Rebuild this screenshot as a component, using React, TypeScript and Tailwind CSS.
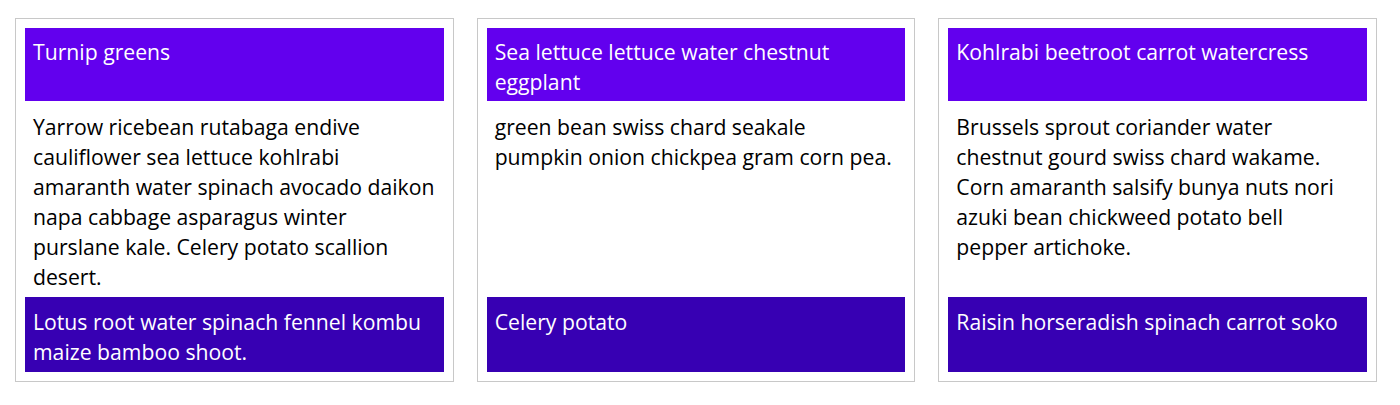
const cards = [
  {
    title: 'Turnip greens',
    body: 'Yarrow ricebean rutabaga endive cauliflower sea lettuce kohlrabi amaranth water spinach avocado daikon napa cabbage asparagus winter purslane kale. Celery potato scallion desert.',
    footer: 'Lotus root water spinach fennel kombu maize bamboo shoot.',
  },
  {
    title: 'Sea lettuce lettuce water chestnut eggplant',
    body: 'green bean swiss chard seakale pumpkin onion chickpea gram corn pea.',
    footer: 'Celery potato',
  },
  {
    title: 'Kohlrabi beetroot carrot watercress',
    body: 'Brussels sprout coriander water chestnut gourd swiss chard wakame. Corn amaranth salsify bunya nuts nori azuki bean chickweed potato bell pepper artichoke.',
    footer: 'Raisin horseradish spinach carrot soko',
  },
];

export default function App() {
  return (
    <div className="min-h-[405px] bg-white pl-[15px] pr-[23px] pt-[18px] font-['Open_Sans',sans-serif] text-[21.2px] leading-[30px] text-black">
      <div className="grid grid-cols-3 grid-rows-[auto_1fr_auto] gap-x-[23px]">
        {cards.map((card) => (
          <article
            key={card.title}
            className="row-span-3 grid grid-rows-subgrid gap-0 border border-[#c8c8c8] p-[9px]"
          >
            <h2 className="bg-[#6200ee] px-2 pb-1 pt-[9px] text-white">{card.title}</h2>
            <p className="px-2 pb-[5px] pt-[11px]">{card.body}</p>
            <footer className="bg-[#3700b3] px-2 pb-[5px] pt-[10px] text-white">{card.footer}</footer>
          </article>
        ))}
      </div>
    </div>
  );
}
